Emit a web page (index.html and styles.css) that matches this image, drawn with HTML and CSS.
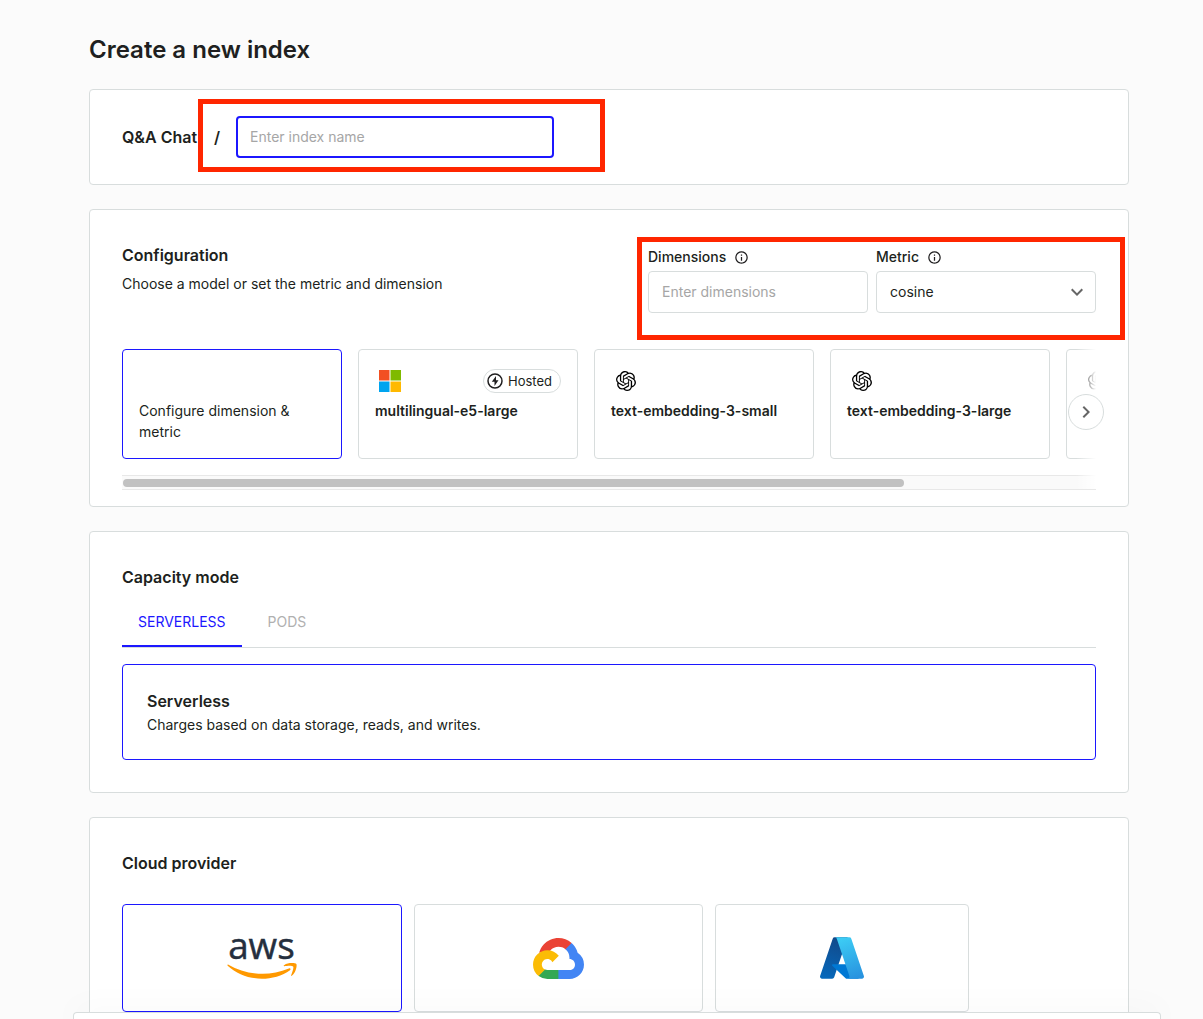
FILE: index.html
```html
<!DOCTYPE html>
<html lang="en">
<head>
<meta charset="utf-8">
<meta name="viewport" content="width=device-width, initial-scale=1">
<title>Create a new index</title>
<link rel="stylesheet" href="styles.css">
</head>
<body>
<svg class="sprite" aria-hidden="true">
  <symbol id="openai" viewBox="0 0 24 24"><path d="M22.2819 9.8211a5.9847 5.9847 0 0 0-.5157-4.9108 6.0462 6.0462 0 0 0-6.5098-2.9A6.0651 6.0651 0 0 0 4.9807 4.1818a5.9847 5.9847 0 0 0-3.9977 2.9 6.0462 6.0462 0 0 0 .7427 7.0966 5.98 5.98 0 0 0 .511 4.9107 6.051 6.051 0 0 0 6.5146 2.9001A5.9847 5.9847 0 0 0 13.2599 24a6.0557 6.0557 0 0 0 5.7718-4.2058 5.9894 5.9894 0 0 0 3.9977-2.9001 6.0557 6.0557 0 0 0-.7475-7.0729zm-9.022 12.6081a4.4755 4.4755 0 0 1-2.8764-1.0408l.1419-.0804 4.7783-2.7582a.7948.7948 0 0 0 .3927-.6813v-6.7369l2.02 1.1686a.071.071 0 0 1 .038.052v5.5826a4.504 4.504 0 0 1-4.4945 4.4944zm-9.6607-4.1254a4.4708 4.4708 0 0 1-.5346-3.0137l.142.0852 4.783 2.7582a.7712.7712 0 0 0 .7806 0l5.8428-3.3685v2.3324a.0804.0804 0 0 1-.0332.0615L9.74 19.9502a4.4992 4.4992 0 0 1-6.1408-1.6464zM2.3408 7.8956a4.485 4.485 0 0 1 2.3655-1.9728V11.6a.7664.7664 0 0 0 .3879.6765l5.8144 3.3543-2.0201 1.1685a.0757.0757 0 0 1-.071 0l-4.8303-2.7865A4.504 4.504 0 0 1 2.3408 7.872zm16.5963 3.8558L13.1038 8.364 15.1192 7.2a.0757.0757 0 0 1 .071 0l4.8303 2.7913a4.4944 4.4944 0 0 1-.6765 8.1042v-5.6772a.79.79 0 0 0-.407-.667zm2.0107-3.0231l-.142-.0852-4.7735-2.7818a.7759.7759 0 0 0-.7854 0L9.409 9.2297V6.8974a.0662.0662 0 0 1 .0284-.0615l4.8303-2.7866a4.4992 4.4992 0 0 1 6.6802 4.66zM8.3065 12.863l-2.02-1.1638a.0804.0804 0 0 1-.038-.0567V6.0742a4.4992 4.4992 0 0 1 7.3757-3.4537l-.142.0805L8.704 5.459a.7948.7948 0 0 0-.3927.6813zm1.0976-2.3654l2.602-1.4998 2.6069 1.4998v2.9994l-2.5974 1.4997-2.6067-1.4997Z"/></symbol>
  <symbol id="info" viewBox="0 0 24 24"><path fill="currentColor" d="M11 7h2v2h-2zm0 4h2v6h-2zm1-9C6.48 2 2 6.48 2 12s4.48 10 10 10 10-4.48 10-10S17.52 2 12 2zm0 18c-4.41 0-8-3.59-8-8s3.59-8 8-8 8 3.59 8 8-3.59 8-8 8z"/></symbol>
</svg>

<main class="page">
  <h1 class="title">Create a new index</h1>

  <section class="card name-card">
    <label class="project" for="index-name">Q&amp;A Chat</label>
    <div class="name-field">
      <span class="slash">/</span>
      <input class="input input-active" id="index-name" type="text" placeholder="Enter index name">
      <div class="mark mark-name"></div>
    </div>
  </section>

  <section class="card config-card">
    <div class="config-head">
      <div>
        <h2 class="heading">Configuration</h2>
        <p class="hint">Choose a model or set the metric and dimension</p>
      </div>
      <div class="fields">
        <div class="field">
          <label class="label" for="dimensions">Dimensions <svg class="info"><use href="#info"/></svg></label>
          <input class="input" id="dimensions" type="text" placeholder="Enter dimensions">
        </div>
        <div class="field">
          <label class="label" for="metric">Metric <svg class="info"><use href="#info"/></svg></label>
          <div class="select-wrap">
            <select class="input select" id="metric"><option>cosine</option><option>euclidean</option><option>dotproduct</option></select>
            <svg class="caret" viewBox="0 0 24 24"><path d="M7.41 8.59 12 13.17l4.59-4.58L18 10l-6 6-6-6z"/></svg>
          </div>
        </div>
        <div class="mark mark-fields"></div>
      </div>
    </div>

    <div class="carousel">
      <div class="models">
        <button class="model model-selected" type="button"><span class="model-top"></span><span class="model-text">Configure dimension &amp; metric</span></button>
        <button class="model" type="button">
          <span class="model-top">
            <svg class="logo" viewBox="0 0 22 22"><path fill="#f25022" d="M0 0h10.500v10.500H0z"/><path fill="#7fba00" d="M11.500 0H22v10.500H11.500z"/><path fill="#00a4ef" d="M0 11.500h10.500V22H0z"/><path fill="#ffb900" d="M11.500 11.500H22V22H11.500z"/></svg>
            <span class="badge"><svg class="bolt" viewBox="0 0 16 16"><circle cx="8" cy="8" r="7" fill="none" stroke="currentColor" stroke-width="1.500"/><path fill="currentColor" d="M9 3 4.800 8.800h2.700V13l4-5.800H9z"/></svg>Hosted</span>
          </span>
          <span class="model-name">multilingual-e5-large</span>
        </button>
        <button class="model" type="button"><span class="model-top"><svg class="logo logo-openai"><use href="#openai"/></svg></span><span class="model-name">text-embedding-3-small</span></button>
        <button class="model" type="button"><span class="model-top"><svg class="logo logo-openai"><use href="#openai"/></svg></span><span class="model-name">text-embedding-3-large</span></button>
        <button class="model" type="button" aria-label="More models"><span class="model-top"><svg class="logo logo-openai"><use href="#openai"/></svg></span></button>
      </div>
      <div class="track"><div class="thumb"></div></div>
      <div class="fade"></div>
      <button class="next" type="button" aria-label="Next models"><svg viewBox="0 0 24 24"><path d="M10 6 8.590 7.410 13.170 12l-4.580 4.590L10 18l6-6z"/></svg></button>
    </div>
  </section>

  <section class="card capacity-card">
    <h2 class="heading">Capacity mode</h2>
    <div class="tabs" role="tablist">
      <button class="tab tab-active" type="button" role="tab" aria-selected="true">SERVERLESS</button>
      <button class="tab" type="button" role="tab" aria-selected="false">PODS</button>
    </div>
    <div class="panel">
      <h3 class="panel-title">Serverless</h3>
      <p class="panel-text">Charges based on data storage, reads, and writes.</p>
    </div>
  </section>

  <section class="card cloud-card">
    <h2 class="heading">Cloud provider</h2>
    <div class="providers">
      <button class="provider provider-selected" type="button" aria-label="AWS">
        <svg class="aws" viewBox="0 0 304 182">
          <text x="5" y="94">aws</text>
          <path fill="#ff9900" d="M273.500 143.700c-32.900 24.300-80.700 37.200-121.800 37.200-57.600 0-109.500-21.300-148.700-56.700-3.100-2.800-.3-6.600 3.400-4.400 42.400 24.600 94.700 39.500 148.800 39.500 36.500 0 76.600-7.600 113.500-23.200 5.500-2.500 10.200 3.600 4.800 7.600zM287.200 128.100c-4.200-5.400-27.800-2.600-38.500-1.300-3.200.4-3.700-2.400-.8-4.500 18.800-13.200 49.700-9.400 53.300-5 3.600 4.500-1 35.400-18.600 50.200-2.700 2.300-5.300 1.100-4.100-1.900 4-9.900 12.900-32.200 8.700-37.500z"/>
        </svg>
      </button>
      <button class="provider" type="button" aria-label="Google Cloud">
        <svg class="gcp" viewBox="0 0 256 206">
          <path fill="#ea4335" d="M170.252 56.819l22.253-22.253 1.483-9.370C153.437-11.677 88.976-7.496 52.420 33.920 42.267 45.423 34.734 59.764 30.717 74.573l7.970-1.123 44.505-7.340 3.436-3.513c19.797-21.742 53.270-24.667 76.128-6.168l7.496.390z"/>
          <path fill="#4285f4" d="M224.205 73.918a100.249 100.249 0 0 0-30.217-48.722l-31.232 31.232a55.515 55.515 0 0 1 20.379 44.037v5.544c15.350 0 27.797 12.445 27.797 27.796 0 15.352-12.446 27.573-27.797 27.573h-55.671l-5.466 5.934v33.340l5.466 5.231h55.670c39.930.311 72.553-31.494 72.864-71.424a72.303 72.303 0 0 0-31.793-60.541"/>
          <path fill="#34a853" d="M71.870 205.796h55.593V161.290H71.870a27.275 27.275 0 0 1-11.400-2.498l-7.887 2.420-22.409 22.253-1.952 7.574a72.100 72.100 0 0 0 43.648 14.757"/>
          <path fill="#fbbc05" d="M71.870 61.425C31.941 61.664-.237 94.228.002 134.157a72.301 72.301 0 0 0 28.222 56.880l32.248-32.246c-13.990-6.322-20.208-22.786-13.887-36.776 6.320-13.990 22.786-20.208 36.775-13.888a27.796 27.796 0 0 1 13.887 13.888l32.248-32.248A72.224 72.224 0 0 0 71.870 61.425"/>
        </svg>
      </button>
      <button class="provider" type="button" aria-label="Azure">
        <svg class="azure" viewBox="0 0 96 96">
          <defs>
            <linearGradient id="az-a" x1="45" y1="12" x2="18" y2="92" gradientUnits="userSpaceOnUse"><stop offset="0" stop-color="#114a8b"/><stop offset="1" stop-color="#0669bc"/></linearGradient>
            <linearGradient id="az-b" x1="48" y1="10" x2="77" y2="89" gradientUnits="userSpaceOnUse"><stop offset="0" stop-color="#3ccbf4"/><stop offset="1" stop-color="#2892df"/></linearGradient>
          </defs>
          <path fill="url(#az-a)" d="M33.338 6.544h26.038l-27.030 80.087a4.152 4.152 0 0 1-3.933 2.824H8.149a4.145 4.145 0 0 1-3.928-5.470L29.404 9.368a4.152 4.152 0 0 1 3.934-2.825z"/>
          <path fill="#0078d4" d="M71.175 60.261h-41.290a1.911 1.911 0 0 0-1.305 3.309l26.532 24.764a4.171 4.171 0 0 0 2.846 1.121h23.380z"/>
          <path fill="url(#az-b)" d="M66.595 9.364a4.145 4.145 0 0 0-3.928-2.820H33.648a4.146 4.146 0 0 1 3.928 2.820l25.184 74.620a4.146 4.146 0 0 1-3.928 5.472h29.020a4.146 4.146 0 0 0 3.927-5.472z"/>
        </svg>
      </button>
    </div>
  </section>
</main>
<footer class="action-bar"></footer>
</body>
</html>
```
FILE: styles.css
```css
:root {
  --blue: #1c17ff;
  --ink: #201f20;
  --line: #d8dddd;
  --red: #ff2600;
}
* { box-sizing: border-box; }
body {
  margin: 0;
  background: #fbfbfb;
  color: var(--ink);
  font: 14px/20px Inter, "Liberation Sans", sans-serif;
}
h1, h2, h3, p { margin: 0; }
button, input, select { font: inherit; color: inherit; }
button { cursor: pointer; }
.sprite { display: none; }
.page {
  height: 100vh;
  overflow: hidden;
  padding: 35px 74px 0 89px;
  display: flex;
  flex-direction: column;
  gap: 24px;
}
.title { font-size: 24px; line-height: 30px; font-weight: 600; }
.card {
  flex: none;
  background: #fff;
  border: 1px solid var(--line);
  border-radius: 4px;
  padding: 32px;
}
.heading { font-size: 16px; line-height: 26px; font-weight: 600; }

.name-card { display: flex; align-items: center; padding: 26px 32px; }
.project { width: 76px; font-size: 16px; font-weight: 600; white-space: nowrap; }
.name-field { position: relative; display: flex; align-items: center; padding-left: 16px; }
.slash { width: 22px; font-size: 16px; font-weight: 600; }
.input {
  display: block;
  width: 100%;
  height: 42px;
  padding: 0 13px 2px;
  background: #fff;
  border: 1px solid var(--line);
  border-radius: 4px;
  outline: none;
}
.input::placeholder { color: #a6a6a6; opacity: 1; }
.name-field .input { width: 318px; padding: 0 12px 2px; border: 2px solid var(--blue); }

.mark { position: absolute; border: 5px solid var(--red); pointer-events: none; }
.mark-name { inset: -17px -51px -14px 0; }
.mark-fields { inset: -5px -29px -27px -11px; z-index: 2; }

.config-card { padding-bottom: 16px; }
.config-head { display: flex; justify-content: space-between; }
.hint { margin-top: 6px; }
.fields { position: relative; display: flex; gap: 8px; padding-top: 5px; }
.field { width: 220px; display: flex; flex-direction: column; gap: 4px; }
.label { display: flex; align-items: center; gap: 8px; font-weight: 500; }
.info { width: 15px; height: 15px; }
.select-wrap { position: relative; }
.select { appearance: none; padding: 0 13px; }
.caret { position: absolute; right: 7px; top: 9px; width: 24px; height: 24px; fill: #666; pointer-events: none; }

.carousel { position: relative; margin-top: 36px; }
.models { display: flex; gap: 16px; overflow: hidden; }
.model {
  flex: none;
  width: 220px;
  height: 110px;
  padding: 18px 16px 16px;
  display: flex;
  flex-direction: column;
  text-align: left;
  background: #fff;
  border: 1px solid var(--line);
  border-radius: 4px;
}
.model-selected { border-color: var(--blue); }
.model-top { flex: none; display: flex; align-items: center; justify-content: space-between; height: 26px; margin-bottom: 6px; padding-left: 4px; width: 100%; }
.model-text, .model-name { line-height: 21px; }
.model-name { font-weight: 600; }
.logo { width: 22px; height: 22px; }
.logo-openai { width: 22px; height: 20px; }
.badge { display: flex; align-items: center; gap: 5px; height: 24px; padding: 0 8px 0 3px; border: 1px solid var(--line); border-radius: 12px; font-size: 13px; }
.bolt { width: 16px; height: 16px; }
.track { height: 15px; margin-top: 16px; padding: 3px 1px; background: #fafafa; border: solid #e8e8e8; border-width: 1px 0; }
.thumb { width: 80.3%; height: 8px; border-radius: 4px; background: #c1c1c1; }
.fade { position: absolute; top: 0; right: 0; bottom: 1px; width: 20px; background: linear-gradient(to right, #fff0, #fff); }
.next {
  position: absolute;
  top: 45px;
  right: -8px;
  width: 36px;
  height: 36px;
  padding: 0;
  display: grid;
  place-items: center;
  background: #fff;
  border: 1px solid var(--line);
  border-radius: 50%;
}
.next svg { width: 24px; height: 24px; fill: #666; }

.tabs { display: flex; margin-top: 7px; border-bottom: 1px solid var(--line); }
.tab { height: 50px; padding: 0 16px; background: none; border: 0; color: #b0b0b0; }
.tab + .tab { padding: 0 26px; }
.tab-active { color: var(--blue); box-shadow: inset 0 -2px var(--blue); }
.panel { margin-top: 16px; padding: 24px 24px 22px; border: 1px solid var(--blue); border-radius: 4px; }
.panel-title { font-size: 16px; line-height: 24px; font-weight: 600; }
.panel-text { line-height: 24px; }

.providers { display: grid; grid-template-columns: 280px 289px 254px; gap: 12px; margin-top: 28px; }
.provider { height: 108px; display: grid; place-items: center; background: #fff; border: 1px solid var(--line); border-radius: 4px; }
.provider-selected { border-color: var(--blue); }
.aws { width: 70px; height: 42px; overflow: visible; }
.aws text { font: 500 160px "Open Sans", sans-serif; fill: #252f3e; stroke: #252f3e; stroke-width: 2px; }
.gcp { width: 51px; height: 41px; }
.azure { width: 48px; height: 48px; }

.action-bar {
  position: fixed;
  left: 73px;
  right: 42px;
  bottom: 0;
  height: 7px;
  background: #fff;
  border: 1px solid var(--line);
  border-bottom: 0;
  border-radius: 4px 4px 0 0;
  box-shadow: 0 0 32px rgba(40, 50, 80, 0.08);
}
```
